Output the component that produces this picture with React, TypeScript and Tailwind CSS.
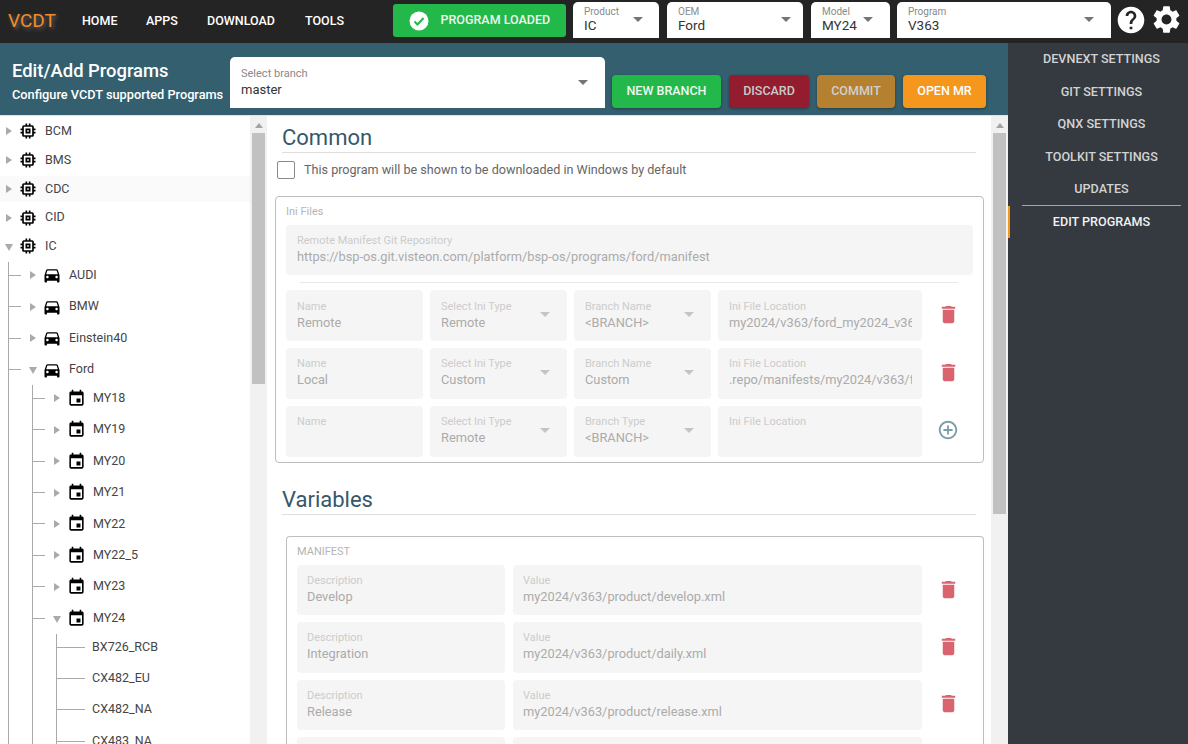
import React from "react";

const P = {
  chip: "M15 9H9v6h6V9zm-2 4h-2v-2h2v2zm8-2V9h-2V7c0-1.1-.9-2-2-2h-2V3h-2v2h-2V3H9v2H7c-1.1 0-2 .9-2 2v2H3v2h2v2H3v2h2v2c0 1.1.9 2 2 2h2v2h2v-2h2v2h2v-2h2c1.1 0 2-.9 2-2v-2h2v-2h-2v-2h2zm-4 6H7V7h10v10z",
  car: "M18.92 6.01C18.72 5.42 18.16 5 17.5 5h-11c-.66 0-1.21.42-1.42 1.01L3 12v8c0 .55.45 1 1 1h1c.55 0 1-.45 1-1v-1h12v1c0 .55.45 1 1 1h1c.55 0 1-.45 1-1v-8l-2.08-5.99zM6.5 16c-.83 0-1.5-.67-1.5-1.5S5.67 13 6.5 13s1.5.67 1.5 1.5S7.33 16 6.5 16zm11 0c-.83 0-1.5-.67-1.5-1.5s.67-1.5 1.5-1.5 1.5.67 1.5 1.5-.67 1.5-1.5 1.5zM5 11l1.5-4.5h11L19 11H5z",
  event: "M17 12h-5v5h5v-5zM16 1v2H8V1H6v2H5c-1.11 0-1.99.9-1.99 2L3 19c0 1.1.89 2 2 2h14c1.1 0 2-.9 2-2V5c0-1.1-.9-2-2-2h-1V1h-2zm3 18H5V8h14v11z",
  del: "M6 19c0 1.1.9 2 2 2h8c1.1 0 2-.9 2-2V7H6v12zM19 4h-3.5l-1-1h-5l-1 1H5v2h14V4z",
  help: "M12 2C6.48 2 2 6.48 2 12s4.48 10 10 10 10-4.48 10-10S17.52 2 12 2zm1 17h-2v-2h2v2zm2.07-7.75l-.9.92C13.45 12.9 13 13.5 13 15h-2v-.5c0-1.1.45-2.1 1.17-2.83l1.24-1.26c.37-.36.59-.86.59-1.41 0-1.1-.9-2-2-2s-2 .9-2 2H8c0-2.21 1.79-4 4-4s4 1.79 4 4c0 .88-.36 1.68-.93 2.25z",
  gear: "M19.14 12.94c.04-.3.06-.61.06-.94 0-.32-.02-.64-.07-.94l2.03-1.58c.18-.14.23-.41.12-.61l-1.92-3.32c-.12-.22-.37-.29-.59-.22l-2.39.96c-.5-.38-1.03-.7-1.62-.94l-.36-2.54c-.04-.24-.24-.41-.48-.41h-3.84c-.24 0-.43.17-.47.41l-.36 2.54c-.59.24-1.13.57-1.62.94l-2.39-.96c-.22-.08-.47 0-.59.22L2.74 8.87c-.12.21-.08.47.12.61l2.03 1.58c-.05.3-.09.63-.09.94s.02.64.07.94l-2.03 1.58c-.18.14-.23.41-.12.61l1.92 3.32c.12.22.37.29.59.22l2.39-.96c.5.38 1.03.7 1.62.94l.36 2.54c.05.24.24.41.48.41h3.84c.24 0 .44-.17.47-.41l.36-2.54c.59-.24 1.13-.56 1.62-.94l2.39.96c.22.08.47 0 .59-.22l1.92-3.32c.12-.22.07-.47-.12-.61l-2.01-1.58zM12 15.6c-1.98 0-3.6-1.62-3.6-3.6s1.62-3.6 3.6-3.6 3.6 1.62 3.6 3.6-1.62 3.6-3.6 3.6z",
  add: "M13 7h-2v4H7v2h4v4h2v-4h4v-2h-4V7zm-1-5C6.48 2 2 6.48 2 12s4.48 10 10 10 10-4.48 10-10S17.52 2 12 2zm0 18c-4.41 0-8-3.59-8-8s3.59-8 8-8 8 3.59 8 8-3.59 8-8 8z",
};

function Icon({ d, className }: { d: string; className?: string }) {
  return (
    <svg viewBox="0 0 24 24" fill="currentColor" className={className}>
      <path d={d} />
    </svg>
  );
}

function Caret({ className = "" }: { className?: string }) {
  return <span className={"block h-0 w-0 border-x-[5px] border-t-[5px] border-x-transparent border-t-[#757575] " + className} />;
}

function TreeArrow({ open }: { open?: boolean }) {
  return open ? (
    <span className="mt-[2px] block h-0 w-0 shrink-0 border-x-[4px] border-t-[7px] border-x-transparent border-t-[#aaaaaa]" />
  ) : (
    <span className="ml-px mr-px block h-0 w-0 shrink-0 border-y-[4px] border-l-[6px] border-y-transparent border-l-[#aaaaaa]" />
  );
}

function NavSelect({ label, value, w, caretGap }: { label: string; value: string; w: string; caretGap: string }) {
  return (
    <div className={"flex h-[36px] shrink-0 items-start justify-between rounded-t-[5px] bg-white pl-[11px] " + w + " " + caretGap}>
      <div className="pt-[4px]">
        <div className="text-[10px] leading-[12px] text-[#8a8a8a]">{label}</div>
        <div className="text-[13.5px] leading-[14px] text-[#333]">{value}</div>
      </div>
      <Caret className="mt-[15px]" />
    </div>
  );
}

function ActionButton({ children, cls }: { children: React.ReactNode; cls: string }) {
  return (
    <div className={"flex h-[33px] items-center justify-center rounded-[4px] text-[12.5px] font-medium shadow-[0_1px_3px_rgba(0,0,0,0.35)] " + cls}>
      {children}
    </div>
  );
}

function Row0({ icon, label, open, hl }: { icon: string; label: string; open?: boolean; hl?: boolean }) {
  return (
    <div className={"mt-[2.75px] flex h-[26px] items-center pl-[5px] " + (hl ? "bg-[#fafafa]" : "")}>
      <span className="flex w-[8px] justify-center"><TreeArrow open={open} /></span>
      <Icon d={icon} className="ml-[5px] h-[20px] w-[20px] text-black" />
      <span className="ml-[7px] text-[12.5px] text-[#444]">{label}</span>
    </div>
  );
}

function TreeRow({ icon, label, open, leaf, first }: { icon?: string; label: string; open?: boolean; leaf?: boolean; first?: boolean }) {
  return (
    <div className={"flex h-[26px] items-center " + (first ? "mt-[2.9px]" : "mt-[5.4px]")}>
      <span className={"h-px shrink-0 bg-[#aaaaaa] " + (leaf ? "w-[28px]" : "w-[12px]")} />
      {!leaf && (
        <span className="ml-[7px] flex w-[10px] shrink-0 justify-center"><TreeArrow open={open} /></span>
      )}
      {!leaf && icon && (
        <span className="ml-[4px] flex h-[20px] w-[20px] shrink-0 items-center justify-center text-black">
          <Icon d={icon} className={icon === P.event ? "h-[19px] w-[19px]" : "h-[20px] w-[20px]"} />
        </span>
      )}
      <span className="ml-[7px] whitespace-nowrap text-[12.5px] text-[#444]">{label}</span>
    </div>
  );
}

function Scrollbar({ h }: { h: string }) {
  return (
    <div className="flex w-[17px] shrink-0 flex-col items-center bg-[#f1f1f1]">
      <span className="mt-[7px] block h-0 w-0 border-x-[4px] border-b-[5px] border-x-transparent border-b-[#a3a3a3]" />
      <div className={"mt-[5px] w-[13px] bg-[#c1c1c1] " + h} />
    </div>
  );
}

function Field({ label, value, w, h = "h-[51px]", caret, pl = "pl-[11px]", pt = "pt-[9px]" }: { label: string; value?: string; w: string; h?: string; caret?: boolean; pl?: string; pt?: string }) {
  return (
    <div className={"relative shrink-0 overflow-hidden rounded-[4px] bg-[#f5f5f5] pr-[10px] " + w + " " + h + " " + pl + " " + pt}>
      <div className="overflow-hidden whitespace-nowrap text-[11px] leading-[13px] text-[#cccccc]">{label}</div>
      <div className="mt-px overflow-hidden whitespace-nowrap text-[12.8px] leading-[18px] text-[#ababab]">{value || "\u00a0"}</div>
      {caret && <Caret className="absolute right-[17px] top-[22px] !border-t-[#c4c4c4]" />}
    </div>
  );
}

function IniRow({ cols, del = true, pt }: { cols: [string, string, string, string, string, string, string]; del?: boolean; pt?: string }) {
  return (
    <div className="flex gap-[7px]">
      <Field label={cols[0]} value={cols[1]} w="w-[137px]" pt={pt} />
      <Field label={cols[2]} value={cols[3]} w="w-[137px]" caret pt={pt} />
      <Field label={cols[4]} value={cols[5]} w="w-[137px]" caret pt={pt} />
      <Field label="Ini File Location" value={cols[6]} w="w-[204px]" pt={pt} />
      <div className="flex w-[38px] items-center justify-center pb-[2px]">
        {del ? <Icon d={P.del} className="h-[23px] w-[23px] text-[#d9636f]" /> : <Icon d={P.add} className="h-[22px] w-[22px] text-[#7c9dab]" />}
      </div>
    </div>
  );
}

function VarRow({ d, v }: { d: string; v: string }) {
  return (
    <div className="flex gap-[8px]">
      <Field label="Description" value={d} w="w-[208px]" h="h-[50.4px]" pl="pl-[10px]" />
      <Field label="Value" value={v} w="w-[409px]" h="h-[50.4px]" pl="pl-[10px]" />
      <div className="flex w-[36px] items-center justify-center pb-[2px]">
        <Icon d={P.del} className="h-[23px] w-[23px] text-[#d9636f]" />
      </div>
    </div>
  );
}

const settings = ["DEVNEXT SETTINGS", "GIT SETTINGS", "QNX SETTINGS", "TOOLKIT SETTINGS", "UPDATES"];

export default function App() {
  return (
    <div className="h-[744px] w-[1188px] overflow-hidden bg-white font-['Roboto',sans-serif]">
      {/* top bar */}
      <div className="flex h-[43px] items-start bg-[#242424]">
        <div className="mt-[9px] w-[82px] pl-[8px] text-[19px] leading-[23px] text-[#f28c28] [text-shadow:2px_2px_4px_rgba(255,255,255,0.3)]">VCDT</div>
        <nav className="mt-[13px] flex gap-[26px] text-[12.5px] font-medium leading-[16px] text-white">
          <span className="w-[38px]">HOME</span>
          <span className="w-[35px]">APPS</span>
          <span className="w-[72px]">DOWNLOAD</span>
          <span>TOOLS</span>
        </nav>
        <div className="ml-[49px] mt-[4px] flex h-[33px] w-[173px] shrink-0 items-center rounded-[3px] bg-[#22b84a] pl-[16px] text-[12.5px] font-medium text-[#eef8ee]">
          <svg viewBox="0 0 20 20" className="h-[20px] w-[20px]">
            <circle cx="10" cy="10" r="9.5" fill="#fff" />
            <path d="M5.5 10.5l3 3 6-6.5" fill="none" stroke="#22b84a" strokeWidth="2" />
          </svg>
          <span className="ml-[11.5px]">PROGRAM LOADED</span>
        </div>
        <div className="ml-[7px] mt-[2px] flex gap-[8px]">
          <NavSelect label="Product" value="IC" w="w-[86px]" caretGap="pr-[16px]" />
          <NavSelect label="OEM" value="Ford" w="w-[136px]" caretGap="pr-[12px]" />
          <NavSelect label="Model" value="MY24" w="w-[79px] -mr-px" caretGap="pr-[17px]" />
          <NavSelect label="Program" value="V363" w="w-[214px]" caretGap="pr-[17px]" />
        </div>
        <Icon d={P.help} className="ml-[4px] mt-[4px] h-[32px] w-[32px] text-white" />
        <Icon d={P.gear} className="ml-[3px] mt-[3px] h-[33px] w-[33px] text-white" />
      </div>

      <div className="flex h-[701px]">
        <div className="flex w-[1008px] shrink-0 flex-col">
          {/* header */}
          <div className="flex h-[72px] shrink-0 items-start bg-[#345f6e]">
            <div className="w-[230px] pl-[12px] pt-[17px] text-white">
              <div className="text-[18.4px] font-medium leading-[22px]">Edit/Add Programs</div>
              <div className="mt-[5px] whitespace-nowrap text-[12.75px] font-medium leading-[15px]">Configure VCDT supported Programs</div>
            </div>
            <div className="mt-[14px] flex h-[51px] w-[375px] items-start justify-between rounded-t-[5px] bg-white pl-[11px] pr-[17px]">
              <div className="pt-[10px]">
                <div className="text-[11px] leading-[13px] text-[#888]">Select branch</div>
                <div className="mt-px text-[13px] leading-[18px] text-[#333]">master</div>
              </div>
              <Caret className="mt-[23px]" />
            </div>
            <div className="ml-[7px] mt-[32px] flex gap-[8px]">
              <ActionButton cls="w-[109px] bg-[#22b84a] text-[#eef8ee]">NEW BRANCH</ActionButton>
              <ActionButton cls="w-[80px] bg-[#941c2f] text-[#c9c9c9]">DISCARD</ActionButton>
              <ActionButton cls="w-[78px] bg-[#b5802f] text-[#d0d0d0]">COMMIT</ActionButton>
              <ActionButton cls="w-[83px] bg-[#f5961d] text-white">OPEN MR</ActionButton>
            </div>
          </div>

          <div className="flex min-h-0 flex-1 border-t border-[#e4e4e4]">
            {/* tree */}
            <div className="w-[250px] shrink-0 overflow-hidden">
              <div className="-mt-[0.3px]">
                <Row0 icon={P.chip} label="BCM" />
                <Row0 icon={P.chip} label="BMS" />
                <Row0 icon={P.chip} label="CDC" hl />
                <Row0 icon={P.chip} label="CID" />
                <Row0 icon={P.chip} label="IC" open />
                <div className="ml-[8px] border-l border-[#aaaaaa]">
                  <TreeRow icon={P.car} label="AUDI" first />
                  <TreeRow icon={P.car} label="BMW" />
                  <TreeRow icon={P.car} label="Einstein40" />
                  <TreeRow icon={P.car} label="Ford" open />
                  <div className="ml-[23px] border-l border-[#aaaaaa]">
                    {["MY18", "MY19", "MY20", "MY21", "MY22", "MY22_5", "MY23"].map((m, i) => (
                      <TreeRow key={m} icon={P.event} label={m} first={i === 0} />
                    ))}
                    <TreeRow icon={P.event} label="MY24" open />
                    <div className="ml-[23px] border-l border-[#aaaaaa]">
                      {["BX726_RCB", "CX482_EU", "CX482_NA", "CX483_NA"].map((m, i) => (
                        <TreeRow key={m} label={m} leaf first={i === 0} />
                      ))}
                    </div>
                  </div>
                </div>
              </div>
            </div>
            <Scrollbar h="h-[251px]" />

            {/* main */}
            <div className="w-[724px] shrink-0 overflow-hidden">
              <div className="mx-[15px] h-[37px] w-[694px] border-b border-[#dedede] pt-[8px] text-[22px] leading-[28px] text-[#36586a]">Common</div>
              <div className="ml-[10px] mt-[8px] flex items-center">
                <span className="h-[18px] w-[18px] rounded-[2px] border border-[#8a8a8a]" />
                <span className="ml-[9px] text-[12.6px] text-[#666]">This program will be shown to be downloaded in Windows by default</span>
              </div>
              <div className="ml-[8px] mt-[16px] h-[267px] w-[709px] rounded-[4px] border border-[#bdbdbd] pl-[10px] pt-[8px]">
                <div className="text-[11px] leading-[13px] text-[#b5b5b5]">Ini Files</div>
                <div className="mt-[7px] h-[50px] w-[687px] rounded-[4px] bg-[#f5f5f5] pl-[11px] pt-[9px]">
                  <div className="text-[11px] leading-[13px] text-[#cccccc]">Remote Manifest Git Repository</div>
                  <div className="mt-px text-[12.8px] leading-[18px] text-[#ababab]">https://bsp-os.git.visteon.com/platform/bsp-os/programs/ford/manifest</div>
                </div>
                <div className="ml-[14px] mt-[7px] h-px w-[658px] bg-[#e8e8e8]" />
                <div className="mt-[7px] flex flex-col gap-[7px]">
                  <IniRow pt="pt-[10px]" cols={["Name", "Remote", "Select Ini Type", "Remote", "Branch Name", "<BRANCH>", "my2024/v363/ford_my2024_v363_remote.ini"]} />
                  <IniRow cols={["Name", "Local", "Select Ini Type", "Custom", "Branch Name", "Custom", ".repo/manifests/my2024/v363/ford_my2024.ini"]} />
                  <IniRow cols={["Name", "", "Select Ini Type", "Remote", "Branch Type", "<BRANCH>", ""]} del={false} />
                </div>
              </div>
              <div className="mx-[15px] mt-[21px] h-[31px] w-[694px] border-b border-[#dedede] text-[22px] leading-[32px] text-[#36586a]">Variables</div>
              <div className="ml-[19px] mt-[21px] h-[300px] w-[698px] rounded-t-[4px] border border-b-0 border-[#bdbdbd] pl-[10px] pt-[8px]">
                <div className="text-[11px] leading-[13px] text-[#b5b5b5]">MANIFEST</div>
                <div className="mt-[7px] flex flex-col gap-[7px]">
                  <VarRow d="Develop" v="my2024/v363/product/develop.xml" />
                  <VarRow d="Integration" v="my2024/v363/product/daily.xml" />
                  <VarRow d="Release" v="my2024/v363/product/release.xml" />
                  <VarRow d="" v="" />
                </div>
              </div>
            </div>
            <Scrollbar h="h-[381px]" />
          </div>
        </div>

        {/* settings sidebar */}
        <div className="w-[180px] bg-[#343a40] pt-[0.6px] text-center text-[12.6px] font-medium text-[#d2d2d2]">
          {settings.map((s) => (
            <div key={s} className="ml-[14px] flex h-[32.4px] w-[159px] items-center justify-center">{s}</div>
          ))}
          <div className="-mt-[0.6px] ml-[14px] h-px w-[159px] bg-[#f5961d]" />
          <div className="h-[32px] border-l-2 border-[#f5961d] pl-[12px] text-[#f2f2f2]">
            <div className="flex h-[32px] w-[159px] items-center justify-center">EDIT PROGRAMS</div>
          </div>
        </div>
      </div>
    </div>
  );
}
